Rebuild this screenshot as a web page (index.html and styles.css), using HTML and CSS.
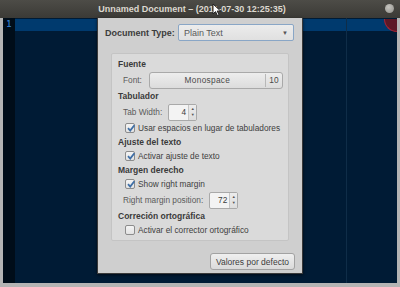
FILE: index.html
```html
<!DOCTYPE html>
<html>
<head>
    <title>Unnamed Document</title>
    <link rel="stylesheet" href="styles.css">
</head>
<body>
    <div class="window">
        <div class="titlebar">
            <span class="title">Unnamed Document – (2011-07-30 12:25:35)</span>
            <span class="close"></span>
        </div>

        <div class="main">
            <div class="gutter">
                <div class="lineno">1</div>
            </div>
            <div class="editor">
                <div class="current-line"></div>
                <div class="margin-line"></div>
                <div class="corner"></div>
            </div>

            <div class="dialog">
                <div class="doc-type">
                    <span class="doc-label">Document Type:</span>
                    <div class="combo">
                        <span>Plain Text</span>
                        <span class="combo-arrow">▼</span>
                    </div>
                </div>

                <div class="frame">
                    <div class="heading">Fuente</div>
                    <div class="row">
                        <span class="label">Font:</span>
                        <div class="font-button">
                            <span class="font-name">Monospace</span>
                            <span class="font-size">10</span>
                        </div>
                    </div>

                    <div class="heading">Tabulador</div>
                    <div class="row">
                        <span class="label">Tab Width:</span>
                        <div class="spin">
                            <span class="spin-value">4</span>
                            <span class="spin-arrows"><i>▲</i><i>▼</i></span>
                        </div>
                    </div>
                    <div class="check">
                        <span class="box checked"><svg width="10" height="10" viewBox="0 0 10 10"><path d="M2 5.2 L4.2 7.6 L8.4 2.2" fill="none" stroke="#3f6fa6" stroke-width="1.8"/></svg></span>
                        <span>Usar espacios en lugar de tabuladores</span>
                    </div>

                    <div class="heading">Ajuste del texto</div>
                    <div class="check">
                        <span class="box checked"><svg width="10" height="10" viewBox="0 0 10 10"><path d="M2 5.2 L4.2 7.6 L8.4 2.2" fill="none" stroke="#3f6fa6" stroke-width="1.8"/></svg></span>
                        <span>Activar ajuste de texto</span>
                    </div>

                    <div class="heading">Margen derecho</div>
                    <div class="check">
                        <span class="box checked"><svg width="10" height="10" viewBox="0 0 10 10"><path d="M2 5.2 L4.2 7.6 L8.4 2.2" fill="none" stroke="#3f6fa6" stroke-width="1.8"/></svg></span>
                        <span>Show right margin</span>
                    </div>
                    <div class="row">
                        <span class="label">Right margin position:</span>
                        <div class="spin">
                            <span class="spin-value">72</span>
                            <span class="spin-arrows"><i>▲</i><i>▼</i></span>
                        </div>
                    </div>

                    <div class="heading">Correción ortográfica</div>
                    <div class="check">
                        <span class="box"></span>
                        <span>Activar el corrector ortográfico</span>
                    </div>
                </div>

                <div class="actions">
                    <button class="button">Valores por defecto</button>
                </div>
            </div>
        </div>

        <svg class="cursor" width="10" height="14" viewBox="0 0 10 14">
            <path d="M1 1 L1 11 L3.5 8.6 L5.4 12.6 L7 11.8 L5.2 8 L8.6 8 Z" fill="#fff" stroke="#222" stroke-width="1"/>
        </svg>
    </div>
</body>
</html>
```

FILE: styles.css
```css
body {
    margin: 0;
    font-family: "Liberation Sans", Arial, sans-serif;
    background-color: #a8a8a8;
}

.window {
    position: relative;
    width: 400px;
    height: 287px;
    display: flex;
    flex-direction: column;
    background: #b4b4b4;
    overflow: hidden;
}

.titlebar {
    height: 18px;
    flex: none;
    display: flex;
    align-items: center;
    justify-content: center;
    padding-right: 16px;
    background: linear-gradient(#4d4c47, #3b3a36);
    position: relative;
}

.title {
    color: #dcd8cf;
    font-size: 9px;
    font-weight: bold;
}

.close {
    position: absolute;
    right: 6px;
    top: 4px;
    width: 9px;
    height: 9px;
    border-radius: 50%;
    background: radial-gradient(circle at 40% 35%, #c6c5c0, #8f8e89);
}

.main {
    flex: 1;
    display: flex;
    margin: 0 3px 4px 3px;
    position: relative;
}

.gutter {
    width: 12px;
    background-color: #000d19;
    padding-top: 1px;
}

.lineno {
    height: 12px;
    line-height: 12px;
    text-align: center;
    font-family: "DejaVu Sans Mono", monospace;
    font-size: 8px;
    font-weight: bold;
    color: #2f78c4;
}

.editor {
    flex: 1;
    position: relative;
    background-color: #001b35;
    padding-top: 1px;
}

.current-line {
    height: 12px;
    background-color: #003a6e;
}

.margin-line {
    position: absolute;
    top: 0;
    bottom: 0;
    left: 331px;
    width: 1px;
    background-color: #0f2d48;
}

.corner {
    position: absolute;
    top: 1px;
    right: 0;
    width: 12px;
    height: 12px;
    background-color: #5c1826;
    border-left: 1px solid #a82232;
    border-bottom: 1px solid #a82232;
    border-bottom-left-radius: 100%;
}

.dialog {
    position: absolute;
    left: 94px;
    top: 0;
    width: 204px;
    height: 255px;
    background-color: #cfcfcf;
    border: 1px solid #3a3a3a;
    border-top: none;
    box-shadow: 0 1px 3px rgba(0,0,0,0.6);
    display: flex;
    flex-direction: column;
}

.doc-type {
    display: flex;
    align-items: center;
    margin: 6px 8px 0 7px;
    height: 17px;
}

.doc-label {
    width: 73px;
    font-size: 9px;
    font-weight: bold;
    color: #3c3c3c;
}

.combo {
    flex: 1;
    height: 15px;
    display: flex;
    align-items: center;
    justify-content: space-between;
    padding: 0 5px 0 5px;
    border: 1px solid #89a6c6;
    border-radius: 2px;
    background: linear-gradient(#ececec, #e0e0e0);
    font-size: 9px;
    color: #5a5a5a;
}

.combo-arrow {
    font-size: 6px;
    color: #555;
}

.frame {
    margin: 12px 13px 0 13px;
    height: 183px;
    padding: 3px 0 0 6px;
    background-color: #dadada;
    border: 1px solid #c4c4c4;
    border-radius: 2px;
    display: flex;
    flex-direction: column;
}

.heading {
    height: 14px;
    line-height: 14px;
    font-size: 8.5px;
    font-weight: bold;
    color: #3a3a3a;
}

.row {
    height: 18px;
    display: flex;
    align-items: center;
    padding-left: 5px;
    gap: 6px;
    font-size: 8.3px;
    color: #5a5a5a;
}

.font-button {
    width: 132px;
    height: 15px;
    display: flex;
    align-items: center;
    border: 1px solid #a9a9a9;
    border-radius: 3px;
    background: linear-gradient(#ededed, #dcdcdc);
    color: #4a4a4a;
    margin-left: 1px;
}

.font-name {
    flex: 1;
    text-align: center;
    letter-spacing: 0.3px;
}

.font-size {
    width: 16px;
    text-align: center;
    border-left: 1px solid #b8b8b8;
    height: 13px;
    line-height: 13px;
}

.spin {
    width: 27px;
    height: 15px;
    display: flex;
    border: 1px solid #a9a9a9;
    border-radius: 2px;
    background-color: #f3f3f3;
    color: #3c3c3c;
}

.spin-value {
    flex: 1;
    text-align: right;
    line-height: 15px;
    padding-right: 2px;
}

.spin-arrows {
    width: 7px;
    display: flex;
    flex-direction: column;
    justify-content: center;
    border-left: 1px solid #c6c6c6;
    background: linear-gradient(#ececec, #dddddd);
}

.spin-arrows i {
    font-style: normal;
    font-size: 4px;
    line-height: 6px;
    text-align: center;
    color: #555;
}

.check {
    height: 14px;
    display: flex;
    align-items: center;
    padding-left: 7px;
    gap: 3px;
    font-size: 8.3px;
    color: #3e3e3e;
}

.box {
    width: 8px;
    height: 8px;
    border: 1px solid #8c8c8c;
    border-radius: 2px;
    background: linear-gradient(#f4f4f4, #e2e2e2);
    position: relative;
}

.box svg {
    position: absolute;
    left: 0;
    top: -1px;
}

.actions {
    display: flex;
    justify-content: flex-end;
    margin: 12px 7px 0 0;
}

.button {
    height: 17px;
    padding: 0 5px;
    font-family: "Liberation Sans", Arial, sans-serif;
    font-size: 8.5px;
    color: #3c3c3c;
    border: 1px solid #a2a2a2;
    border-radius: 3px;
    background: linear-gradient(#efefef, #dadada);
}

.cursor {
    position: absolute;
    left: 212px;
    top: 3px;
}
```
